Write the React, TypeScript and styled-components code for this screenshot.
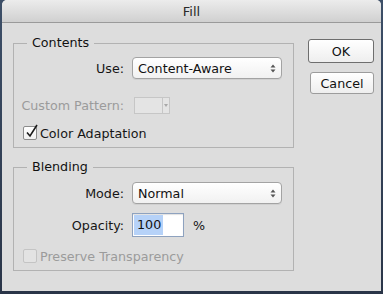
import styled, { createGlobalStyle } from "styled-components";

const GlobalStyle = createGlobalStyle`
  html, body {
    margin: 0;
    padding: 0;
    background: #34445c;
  }
  body {
    width: 383px;
    height: 294px;
    overflow: hidden;
    font-family: "DejaVu Sans", "Liberation Sans", sans-serif;
    font-size: 12.7px;
    color: #151515;
  }
`;

const Desktop = styled.div`
  width: 383px;
  height: 294px;
  box-sizing: border-box;
  padding: 0 2px 3px 2px;
  background: linear-gradient(#3d4f68, #2a3548);
`;

const Window = styled.div`
  height: 100%;
  background: #dddddd;
  border-radius: 5px 5px 0 0;
  display: flex;
  flex-direction: column;
  overflow: hidden;
`;

const TitleBar = styled.div`
  height: 23px;
  flex: none;
  box-sizing: border-box;
  border-bottom: 1px solid #9a9a9a;
  background: linear-gradient(#ececec, #d0d0d0);
  display: flex;
  align-items: center;
  justify-content: center;
  font-size: 13px;
  color: #2a2a2a;
`;

const Body = styled.div`
  display: flex;
  align-items: flex-start;
  padding: 12px 0 0 11px;
  gap: 14px;
`;

const Groups = styled.div`
  display: flex;
  flex-direction: column;
  gap: 11px;
`;

const Group = styled.fieldset<{ $bottom: number }>`
  margin: 0;
  padding: 0 0 ${(p) => p.$bottom}px 0;
  width: 281px;
  box-sizing: border-box;
  border: 1px solid #b2b2b2;
  min-inline-size: auto;
`;

const Legend = styled.legend`
  margin-left: 13px;
  padding: 0 5px;
  line-height: 16px;
  color: #111;
`;

const Row = styled.div<{ $top: number; $h: number }>`
  display: grid;
  grid-template-columns: 110px auto 1fr;
  column-gap: 8px;
  align-items: center;
  height: ${(p) => p.$h}px;
  margin-top: ${(p) => p.$top}px;
`;

const Label = styled.span<{ $disabled?: boolean }>`
  text-align: right;
  white-space: nowrap;
  color: ${(p) => (p.$disabled ? "#9b9b9b" : "#151515")};
`;

const Select = styled.div`
  width: 150px;
  height: 22px;
  box-sizing: border-box;
  border: 1px solid #a3a3a3;
  border-radius: 4px;
  background: linear-gradient(#ffffff, #f1f1f1);
  box-shadow: 0 1px 0 rgba(0, 0, 0, 0.06);
  display: flex;
  align-items: center;
  justify-content: space-between;
  padding: 0 5px 0 5px;
  color: #111;
`;

const Swatch = styled.div`
  margin-left: 2px;
  width: 36px;
  height: 17px;
  box-sizing: border-box;
  border: 1px solid #c6c6c6;
  background: #e4e4e4;
  display: flex;
`;

const SwatchFace = styled.div`
  flex: 1;
  border-right: 1px solid #c6c6c6;
`;

const SwatchArrow = styled.div`
  width: 6px;
  display: flex;
  align-items: center;
  justify-content: center;
`;

const NumberBox = styled.div`
  width: 52px;
  height: 24px;
  box-sizing: border-box;
  border: 1px solid #8ea2bf;
  background: #ffffff;
  box-shadow: inset 0 1px 1px rgba(0, 0, 0, 0.12);
  display: flex;
  align-items: center;
  padding-left: 1px;
`;

const Selected = styled.span`
  background: #b6d2f8;
  padding: 0 2px 0 3px;
  line-height: 20px;
  color: #111;
`;

const Unit = styled.span`
  padding-left: 1px;
  color: #151515;
`;

const CheckRow = styled.label<{ $top: number; $disabled?: boolean }>`
  display: flex;
  align-items: center;
  gap: 3px;
  height: 18px;
  margin-top: ${(p) => p.$top}px;
  padding-left: 9px;
  color: ${(p) => (p.$disabled ? "#9b9b9b" : "#151515")};
`;

const Box = styled.span<{ $disabled?: boolean }>`
  width: 14px;
  height: 14px;
  box-sizing: border-box;
  border: 1px solid ${(p) => (p.$disabled ? "#c4c4c4" : "#8c8c8c")};
  border-radius: 2px;
  background: ${(p) => (p.$disabled ? "#e3e3e3" : "linear-gradient(#ffffff, #f0f0f0)")};
  position: relative;
  flex: none;
`;

const Tick = styled.svg`
  position: absolute;
  left: 1px;
  top: -3px;
`;

const Buttons = styled.div`
  display: flex;
  flex-direction: column;
  align-items: flex-end;
  gap: 9px;
  margin-top: 4px;
  width: 66px;
`;

const Button = styled.div<{ $primary?: boolean }>`
  width: ${(p) => (p.$primary ? 66 : 64)}px;
  height: ${(p) => (p.$primary ? 24 : 22)}px;
  box-sizing: border-box;
  border: ${(p) => (p.$primary ? "1.5px solid #6e6e6e" : "1px solid #9c9c9c")};
  border-radius: 3px;
  background: linear-gradient(#ffffff, #eeeeee);
  display: flex;
  align-items: center;
  justify-content: center;
  color: #111;
`;

const UpDown = () => (
  <svg width="6" height="9" viewBox="0 0 6 9">
    <path d="M3 0.5 L5.5 3.5 H0.5 Z" fill="#555" />
    <path d="M3 8.5 L5.5 5.5 H0.5 Z" fill="#555" />
  </svg>
);

export default function App() {
  return (
    <>
      <GlobalStyle />
      <Desktop>
        <Window>
          <TitleBar>Fill</TitleBar>
          <Body>
            <Groups>
              <Group $bottom={5}>
                <Legend>Contents</Legend>
                <Row $top={6} $h={22}>
                  <Label>Use:</Label>
                  <Select>
                    <span>Content-Aware</span>
                    <UpDown />
                  </Select>
                </Row>
                <Row $top={17} $h={18}>
                  <Label $disabled>Custom Pattern:</Label>
                  <Swatch>
                    <SwatchFace />
                    <SwatchArrow>
                      <svg width="4" height="3" viewBox="0 0 4 3">
                        <path d="M0 0 H4 L2 3 Z" fill="#a8a8a8" />
                      </svg>
                    </SwatchArrow>
                  </Swatch>
                </Row>
                <CheckRow $top={10}>
                  <Box>
                    <Tick width="14" height="15" viewBox="0 0 14 15">
                      <path d="M2 8.5 L5 12 L12 1" fill="none" stroke="#1a1a1a" strokeWidth="1.6" />
                    </Tick>
                  </Box>
                  Color Adaptation
                </CheckRow>
              </Group>
              <Group $bottom={5}>
                <Legend>Blending</Legend>
                <Row $top={7} $h={22}>
                  <Label>Mode:</Label>
                  <Select>
                    <span>Normal</span>
                    <UpDown />
                  </Select>
                </Row>
                <Row $top={9} $h={24}>
                  <Label>Opacity:</Label>
                  <NumberBox>
                    <Selected>100</Selected>
                  </NumberBox>
                  <Unit>%</Unit>
                </Row>
                <CheckRow $top={10} $disabled>
                  <Box $disabled />
                  Preserve Transparency
                </CheckRow>
              </Group>
            </Groups>
            <Buttons>
              <Button $primary>OK</Button>
              <Button>Cancel</Button>
            </Buttons>
          </Body>
        </Window>
      </Desktop>
    </>
  );
}
